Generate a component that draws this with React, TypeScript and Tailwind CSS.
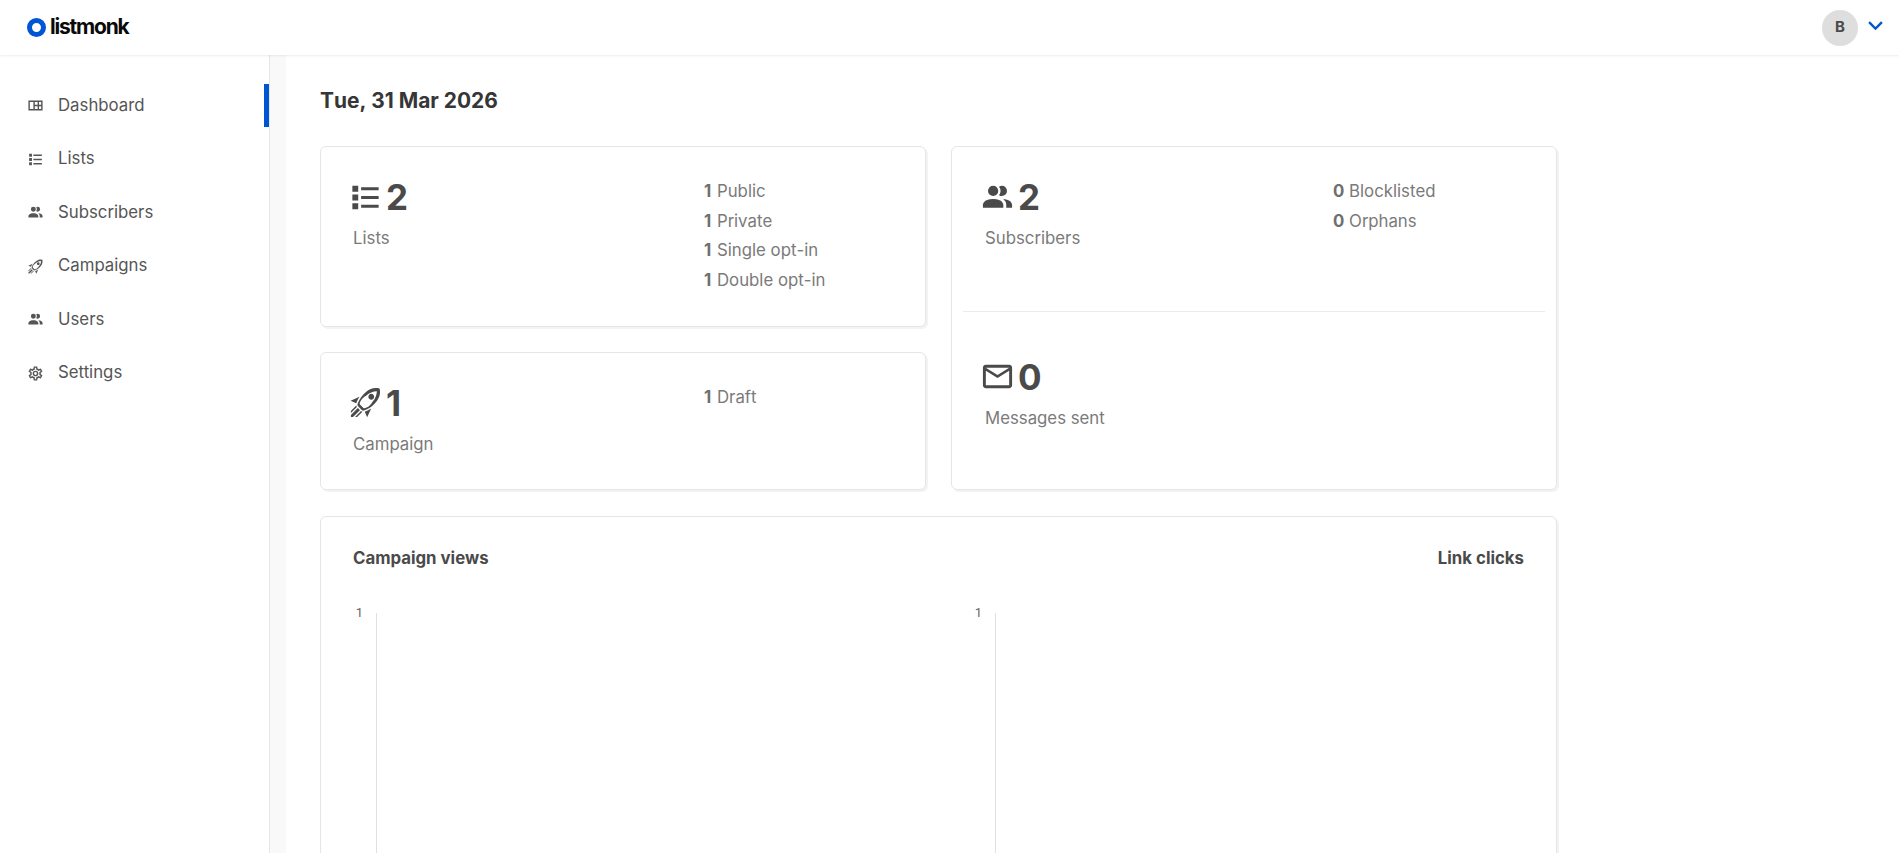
import type { ReactNode } from "react";

const mdi = {
  dashboard: "M2 5v14h20V5H2zm2 2h5v10H4V7zm7 0h4v4h-4V7zm6 0h3v4h-3V7zm-6 6h4v4h-4v-4zm6 0h3v4h-3v-4z",
  list: "M3,4H7V8H3V4M9,5V7H21V5H9M3,10H7V14H3V10M9,11V13H21V11H9M3,16H7V20H3V16M9,17V19H21V17H9",
  users:
    "M16 17V19H2V17S2 13 9 13 16 17 16 17M12.5 7.5A3.5 3.5 0 1 0 9 11A3.5 3.5 0 0 0 12.5 7.5M15.94 13A5.32 5.32 0 0 1 18 17V19H22V17S22 13.37 15.94 13M15 4A3.39 3.39 0 0 0 13.07 4.59A5 5 0 0 1 13.07 10.41A3.39 3.39 0 0 0 15 11A3.5 3.5 0 0 0 15 4Z",
  rocket:
    "M13.13 22.19L11.5 18.36C13.07 17.78 14.54 17 15.9 16.09L13.13 22.19M5.64 12.5L1.81 10.87L7.91 8.1C7 9.46 6.22 10.93 5.64 12.5M21.61 2.39C21.61 2.39 16.66 .269 11 5.93C8.81 8.12 7.5 10.53 6.65 12.64C6.37 13.39 6.56 14.21 7.11 14.77L9.24 16.89C9.79 17.45 10.61 17.63 11.36 17.35C13.5 16.53 15.88 15.19 18.07 13C23.73 7.34 21.61 2.39 21.61 2.39M12.7 15.5C11.9 15.9 11.1 16.2 10.6 15.8L8.2 13.4C7.8 12.9 8.1 12.1 8.5 11.3C9.3 9.7 10.7 8.1 12.4 7.3C14.6 5.2 17.2 4.3 19.8 4.2C19.7 6.8 18.8 9.4 16.7 11.6C15.9 13.3 14.3 14.7 12.7 15.5M14.54 9.46C13.76 8.68 13.76 7.41 14.54 6.63S16.59 5.85 17.37 6.63C18.14 7.41 18.15 8.68 17.37 9.46C16.59 10.24 15.32 10.24 14.54 9.46M6.24 22L9.88 18.36C9.54 18.27 9.21 18.12 8.91 17.91L4.83 22H6.24M2 22H3.41L8.18 17.24L6.76 15.83L2 20.59V22M2 19.17L6.09 15.09C5.88 14.79 5.73 14.47 5.64 14.12L2 17.76V19.17Z",
  email:
    "M22 6C22 4.9 21.1 4 20 4H4C2.9 4 2 4.9 2 6V18C2 19.1 2.9 20 4 20H20C21.1 20 22 19.1 22 18V6M20 6L12 11L4 6H20M20 18H4V8L12 13L20 8V18Z",
  cog: "M12,8A4,4 0 0,1 16,12A4,4 0 0,1 12,16A4,4 0 0,1 8,12A4,4 0 0,1 12,8M12,10A2,2 0 0,0 10,12A2,2 0 0,0 12,14A2,2 0 0,0 14,12A2,2 0 0,0 12,10M10,22C9.75,22 9.54,21.82 9.5,21.58L9.13,18.93C8.5,18.68 7.96,18.34 7.44,17.94L4.95,18.95C4.73,19.03 4.46,18.95 4.34,18.73L2.34,15.27C2.21,15.05 2.27,14.78 2.46,14.63L4.57,12.97L4.5,12L4.57,11L2.46,9.37C2.27,9.22 2.21,8.95 2.34,8.73L4.34,5.27C4.46,5.05 4.73,4.96 4.95,5.05L7.44,6.05C7.96,5.66 8.5,5.32 9.13,5.07L9.5,2.42C9.54,2.18 9.75,2 10,2H14C14.25,2 14.46,2.18 14.5,2.42L14.87,5.07C15.5,5.32 16.04,5.66 16.56,6.05L19.05,5.05C19.27,4.96 19.54,5.05 19.66,5.27L21.66,8.73C21.79,8.95 21.73,9.22 21.54,9.37L19.43,11L19.5,12L19.43,13L21.54,14.63C21.73,14.78 21.79,15.05 21.66,15.27L19.66,18.73C19.54,18.95 19.27,19.04 19.05,18.95L16.56,17.95C16.04,18.34 15.5,18.68 14.87,18.93L14.5,21.58C14.46,21.82 14.25,22 14,22H10M11.25,4L10.88,6.61C9.68,6.86 8.62,7.5 7.85,8.39L5.44,7.35L4.69,8.65L6.8,10.2C6.4,11.37 6.4,12.64 6.8,13.8L4.68,15.36L5.43,16.66L7.86,15.62C8.63,16.5 9.68,17.14 10.87,17.38L11.24,20H12.76L13.13,17.39C14.32,17.14 15.37,16.5 16.14,15.62L18.57,16.66L19.32,15.36L17.2,13.81C17.6,12.64 17.6,11.37 17.2,10.2L19.31,8.65L18.56,7.35L16.15,8.39C15.38,7.5 14.32,6.86 13.12,6.62L12.75,4H11.25Z",
  chevron: "M7.41,8.58L12,13.17L16.59,8.58L18,10L12,16L6,10L7.41,8.58Z",
};

const Icon = ({ d, className }: { d: string; className: string }) => (
  <svg viewBox="0 0 24 24" fill="currentColor" fillRule="evenodd" className={className}>
    <path d={d} />
  </svg>
);

const navItems = [
  { label: "Dashboard", icon: mdi.dashboard, active: true },
  { label: "Lists", icon: mdi.list },
  { label: "Subscribers", icon: mdi.users },
  { label: "Campaigns", icon: mdi.rocket },
  { label: "Users", icon: mdi.users },
  { label: "Settings", icon: mdi.cog },
];

const Card = ({ className, children }: { className: string; children: ReactNode }) => (
  <div
    className={`rounded-md border border-[#e6e6e6] bg-white shadow-[2px_2px_0_#f3f3f3] ${className}`}
  >
    {children}
  </div>
);

const Stat = ({ icon, value, label }: { icon: string; value: number; label: string }) => (
  <div>
    <div className="flex h-[40px] items-center gap-[3px] text-[#4a4a4a]">
      <Icon d={icon} className="-ml-[5px] h-[35px] w-[35px]" />
      <span className="text-[35px] leading-[40px] font-bold">{value}</span>
    </div>
    <div className="mt-[9px] text-[16.8px] leading-[24px] text-[#7a7a7a]">{label}</div>
  </div>
);

const Counts = ({ items }: { items: [number, string][] }) => (
  <ul className="text-[16.8px] leading-[29.7px] text-[#7a7a7a] [font-kerning:none]">
    {items.map(([n, label]) => (
      <li key={label}>
        <b className={`font-bold text-[#6f6f6f] ${n === 1 ? "mr-px" : ""}`}>{n}</b> {label}
      </li>
    ))}
  </ul>
);

const ChartAxis = () => (
  <div className="flex h-[300px] w-[586px] shrink-0 items-start">
    <span className="mt-[-8px] w-[23px] pr-[13px] text-right font-['Roboto',sans-serif] text-[13px] leading-[16px] text-[#666]">
      1
    </span>
    <div className="h-full w-px bg-[#e0e0e0]" />
  </div>
);

export default function App() {
  return (
    <div className="flex h-[853px] flex-col overflow-hidden bg-white font-['Inter',sans-serif] text-[#4a4a4a]">
      <header className="z-10 flex h-[55px] shrink-0 items-center justify-between pr-[9px] pl-[27px] shadow-[0_1px_2px_rgba(0,0,0,0.08)]">
        <div className="-mt-px flex items-center gap-[4px]">
          <span className="h-[19px] w-[19px] rounded-full border-[5px] border-[#0055d4]" />
          <span className="text-[21px] leading-[24px] font-bold tracking-[-1.2px] text-[#0a0a0a]">
            listmonk
          </span>
        </div>
        <div className="flex items-center gap-[3px]">
          <div className="flex h-[36px] w-[36px] items-center justify-center rounded-full bg-[#dedede] text-[15px] font-bold text-[#4a4a4a]">
            B
          </div>
          <Icon d={mdi.chevron} className="-mt-[5px] h-[29px] w-[29px] text-[#0055d4]" />
        </div>
      </header>

      <div className="flex min-h-0 flex-1">
        <aside className="w-[270px] shrink-0 border-r border-[#e6e6e6] pt-[29px]">
          <nav className="flex flex-col gap-[10.5px]">
            {navItems.map((item) => (
              <a
                key={item.label}
                className={`flex h-[43px] items-center gap-[14px] pl-[27px] text-[16.8px] text-[#555] ${
                  item.active ? "border-r-[5px] border-[#0055d4]" : ""
                }`}
              >
                <Icon d={item.icon} className="h-[17px] w-[17px] text-[#555]" />
                {item.label}
              </a>
            ))}
          </nav>
        </aside>
        <div className="w-[16px] shrink-0 bg-[#f9f9f9]" />

        <main className="min-w-0 flex-1 pt-[32px] pl-[34px]">
          <h1 className="text-[20.9px] leading-[28px] font-bold text-[#363636] [font-kerning:none]">
            Tue, 31 Mar 2026
          </h1>

          <div className="mt-[31px] grid w-[1237px] grid-cols-[606px_606px] gap-x-[25px]">
            <div className="flex flex-col gap-[25px]">
              <Card className="flex h-[180.5px] justify-between pt-[30px] pr-[118px] pl-[32px]">
                <Stat icon={mdi.list} value={2} label="Lists" />
                <div className="w-[103px] whitespace-nowrap">
                  <Counts
                    items={[
                      [1, "Public"],
                      [1, "Private"],
                      [1, "Single opt-in"],
                      [1, "Double opt-in"],
                    ]}
                  />
                </div>
              </Card>
              <Card className="flex h-[138px] justify-between pt-[30px] pr-[118px] pl-[32px]">
                <Stat icon={mdi.rocket} value={1} label="Campaign" />
                <div className="w-[103px] whitespace-nowrap">
                  <Counts items={[[1, "Draft"]]} />
                </div>
              </Card>
            </div>

            <Card className="flex h-[343.5px] flex-col">
              <div className="flex h-[164px] justify-between pt-[30px] pr-[120px] pl-[33px]">
                <Stat icon={mdi.users} value={2} label="Subscribers" />
                <div className="w-[103px] whitespace-nowrap">
                  <Counts
                    items={[
                      [0, "Blocklisted"],
                      [0, "Orphans"],
                    ]}
                  />
                </div>
              </div>
              <div className="mx-[11px] h-px bg-[#ebebeb]" />
              <div className="pt-[44.5px] pl-[33px]">
                <Stat icon={mdi.email} value={0} label="Messages sent" />
              </div>
            </Card>
          </div>

          <Card className="mt-[26px] h-[400px] w-[1237px] pt-[29px] pr-[32px] pl-[32px]">
            <div className="flex justify-between text-[16.8px] leading-[24px] font-bold text-[#4a4a4a]">
              <span>Campaign views</span>
              <span>Link clicks</span>
            </div>
            <div className="mt-[43px] flex gap-[33px]">
              <ChartAxis />
              <ChartAxis />
            </div>
          </Card>
        </main>
      </div>
    </div>
  );
}
